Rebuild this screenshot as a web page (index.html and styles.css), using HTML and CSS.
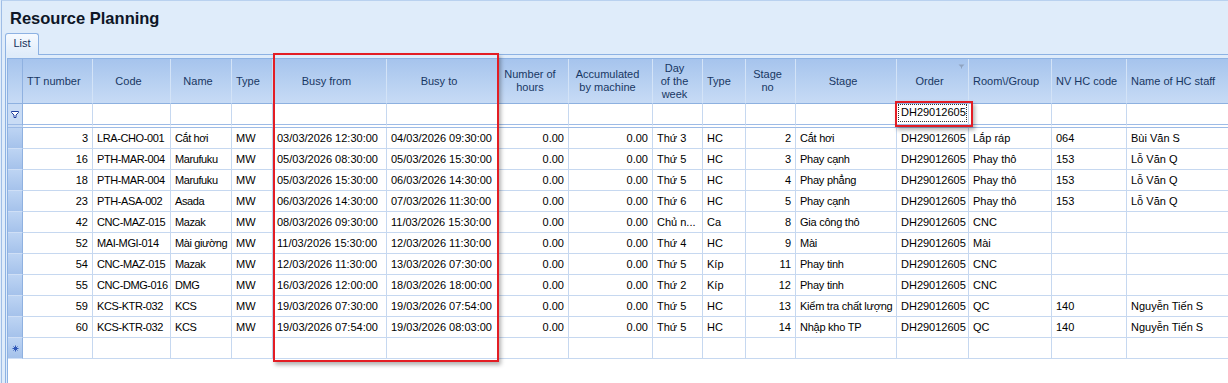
FILE: index.html
```html
<!DOCTYPE html>
<html lang="vi">
<head>
    <meta charset="UTF-8">
    <meta name="viewport" content="width=device-width, initial-scale=1.0">
    <title>Resource Planning</title>
    <link rel="stylesheet" href="styles.css">
</head>
<body>
    <div class="window">
        <h1 class="title">Resource Planning</h1>

        <div class="tabs">
            <div class="tab">List</div>
        </div>

        <div class="tab-page">
            <div class="grid">
                <table class="data">
                    <colgroup>
                        <col style="width:15px">
                        <col style="width:70px">
                        <col style="width:78px">
                        <col style="width:61px">
                        <col style="width:41px">
                        <col style="width:114px">
                        <col style="width:111px">
                        <col style="width:71px">
                        <col style="width:84px">
                        <col style="width:50px">
                        <col style="width:43px">
                        <col style="width:50px">
                        <col style="width:101px">
                        <col style="width:72px">
                        <col style="width:83px">
                        <col style="width:75px">
                        <col style="width:120px">
                    </colgroup>
                    <thead>
                        <tr class="head">
                            <th class="ind"></th>
                            <th class="l">TT number</th>
                            <th>Code</th>
                            <th>Name</th>
                            <th class="l">Type</th>
                            <th>Busy from</th>
                            <th>Busy to</th>
                            <th>Number of<br>hours</th>
                            <th>Accumulated<br>by machine</th>
                            <th>Day<br>of the<br>week</th>
                            <th class="l">Type</th>
                            <th>Stage<br>no</th>
                            <th>Stage</th>
                            <th class="filtered">Order
                                <svg class="col-filter" width="7" height="5" viewBox="0 0 7 5"><path d="M0.5 0.5h6l-2.5 2.5v1.5h-1v-1.5z" fill="#8fa3c0"/></svg>
                            </th>
                            <th class="l">Room\/Group</th>
                            <th class="l">NV HC code</th>
                            <th class="l">Name of HC staff</th>
                        </tr>
                        <tr class="filter-row">
                            <td class="ind filter-ind">
                                <svg width="8" height="8" viewBox="0 0 8 8"><path d="M0.5 1.5h7v1l-2.5 2.5v2.5h-2v-2.5l-2.5-2.5z" fill="#fff" stroke="#1f3d9c"/></svg>
                            </td>
                            <td></td><td></td><td></td><td></td><td></td><td></td><td></td><td></td>
                            <td></td><td></td><td></td><td></td>
                            <td><span class="focus">DH29012605</span></td>
                            <td></td><td></td><td></td>
                        </tr>
                    </thead>
                    <tbody>
                        <tr>
                            <td class="ind"></td><td class="r">3</td><td>LRA-CHO-001</td><td>Cắt hơi</td><td>MW</td>
                            <td>03/03/2026 12:30:00</td><td>04/03/2026 09:30:00</td><td class="r">0.00</td><td class="r">0.00</td>
                            <td>Thứ 3</td><td>HC</td><td class="r">2</td><td>Cắt hơi</td><td>DH29012605</td><td>Lắp ráp</td><td>064</td><td>Bùi Văn S</td>
                        </tr>
                        <tr>
                            <td class="ind"></td><td class="r">16</td><td>PTH-MAR-004</td><td>Marufuku</td><td>MW</td>
                            <td>05/03/2026 08:30:00</td><td>05/03/2026 15:30:00</td><td class="r">0.00</td><td class="r">0.00</td>
                            <td>Thứ 5</td><td>HC</td><td class="r">3</td><td>Phay cạnh</td><td>DH29012605</td><td>Phay thô</td><td>153</td><td>Lỗ Văn Q</td>
                        </tr>
                        <tr>
                            <td class="ind"></td><td class="r">18</td><td>PTH-MAR-004</td><td>Marufuku</td><td>MW</td>
                            <td>05/03/2026 15:30:00</td><td>06/03/2026 14:30:00</td><td class="r">0.00</td><td class="r">0.00</td>
                            <td>Thứ 5</td><td>HC</td><td class="r">4</td><td>Phay phẳng</td><td>DH29012605</td><td>Phay thô</td><td>153</td><td>Lỗ Văn Q</td>
                        </tr>
                        <tr>
                            <td class="ind"></td><td class="r">23</td><td>PTH-ASA-002</td><td>Asada</td><td>MW</td>
                            <td>06/03/2026 14:30:00</td><td>07/03/2026 11:30:00</td><td class="r">0.00</td><td class="r">0.00</td>
                            <td>Thứ 6</td><td>HC</td><td class="r">5</td><td>Phay cạnh</td><td>DH29012605</td><td>Phay thô</td><td>153</td><td>Lỗ Văn Q</td>
                        </tr>
                        <tr>
                            <td class="ind"></td><td class="r">42</td><td>CNC-MAZ-015</td><td>Mazak</td><td>MW</td>
                            <td>08/03/2026 09:30:00</td><td>11/03/2026 15:30:00</td><td class="r">0.00</td><td class="r">0.00</td>
                            <td>Chủ n...</td><td>Ca</td><td class="r">8</td><td>Gia công thô</td><td>DH29012605</td><td>CNC</td><td></td><td></td>
                        </tr>
                        <tr>
                            <td class="ind"></td><td class="r">52</td><td>MAI-MGI-014</td><td>Mài giường</td><td>MW</td>
                            <td>11/03/2026 15:30:00</td><td>12/03/2026 11:30:00</td><td class="r">0.00</td><td class="r">0.00</td>
                            <td>Thứ 4</td><td>HC</td><td class="r">9</td><td>Mài</td><td>DH29012605</td><td>Mài</td><td></td><td></td>
                        </tr>
                        <tr>
                            <td class="ind"></td><td class="r">54</td><td>CNC-MAZ-015</td><td>Mazak</td><td>MW</td>
                            <td>12/03/2026 11:30:00</td><td>13/03/2026 07:30:00</td><td class="r">0.00</td><td class="r">0.00</td>
                            <td>Thứ 5</td><td>Kíp</td><td class="r">11</td><td>Phay tinh</td><td>DH29012605</td><td>CNC</td><td></td><td></td>
                        </tr>
                        <tr>
                            <td class="ind"></td><td class="r">55</td><td>CNC-DMG-016</td><td>DMG</td><td>MW</td>
                            <td>16/03/2026 12:00:00</td><td>18/03/2026 18:00:00</td><td class="r">0.00</td><td class="r">0.00</td>
                            <td>Thứ 2</td><td>Kíp</td><td class="r">12</td><td>Phay tinh</td><td>DH29012605</td><td>CNC</td><td></td><td></td>
                        </tr>
                        <tr>
                            <td class="ind"></td><td class="r">59</td><td>KCS-KTR-032</td><td>KCS</td><td>MW</td>
                            <td>19/03/2026 07:30:00</td><td>19/03/2026 07:54:00</td><td class="r">0.00</td><td class="r">0.00</td>
                            <td>Thứ 5</td><td>HC</td><td class="r">13</td><td>Kiểm tra chất lượng</td><td>DH29012605</td><td>QC</td><td>140</td><td>Nguyễn Tiến S</td>
                        </tr>
                        <tr>
                            <td class="ind"></td><td class="r">60</td><td>KCS-KTR-032</td><td>KCS</td><td>MW</td>
                            <td>19/03/2026 07:54:00</td><td>19/03/2026 08:03:00</td><td class="r">0.00</td><td class="r">0.00</td>
                            <td>Thứ 5</td><td>HC</td><td class="r">14</td><td>Nhập kho TP</td><td>DH29012605</td><td>QC</td><td>140</td><td>Nguyễn Tiến S</td>
                        </tr>
                        <tr class="new-row">
                            <td class="ind">
                                <svg width="7" height="7" viewBox="0 0 7 7"><path d="M3.5 0.5v6M0.5 3.5h6M1.5 1.5l4 4M5.5 1.5l-4 4" stroke="#2e56b8" stroke-width="1"/></svg>
                            </td>
                            <td></td><td></td><td></td><td></td><td></td><td></td><td></td><td></td>
                            <td></td><td></td><td></td><td></td><td></td><td></td><td></td><td></td>
                        </tr>
                    </tbody>
                </table>
            </div>
        </div>
    </div>

    <!-- red highlight marks drawn over the grid -->
    <div class="mark mark-busy"></div>
    <div class="mark mark-order"></div>
</body>
</html>
```

FILE: styles.css
```css
body {
    margin: 0;
    font-family: "Liberation Sans", Arial, sans-serif;
    font-size: 11px;
    background-color: #dfecfa;
    overflow: hidden;
}

.window {
    height: 383px;
    margin-left: 1px;
    border-left: 1px solid #9fbde6;
    border-top: 1px solid #b9d1ef;
    background-color: #dfecfa;
}

.title {
    margin: 7px 0 0 8px;
    font-size: 16.5px;
    line-height: 20px;
    font-weight: bold;
    color: #0e1626;
}

.tabs {
    display: flex;
    margin: 5px 0 0 3px;
}

.tab {
    position: relative;
    z-index: 1;
    width: 32px;
    height: 21px;
    margin-bottom: -1px;
    border: 1px solid #8db2e3;
    border-bottom: none;
    border-radius: 3px 3px 0 0;
    background: linear-gradient(#f6faff, #dfecfa);
    color: #15305a;
    text-align: center;
    line-height: 19px;
}

.tab-page {
    height: 330px;
    margin-left: 3px;
    padding: 3px 0 0 1px;
    border-top: 1px solid #8db2e3;
    border-left: 1px solid #8db2e3;
}

.grid {
    height: 326px;
    overflow: hidden;
    border-top: 1px solid #8db2e3;
    border-left: 1px solid #8db2e3;
    background-color: #fff;
}

.data {
    width: 1239px;
    table-layout: fixed;
    border-collapse: separate;
    border-spacing: 0;
    color: #000;
}

.data th,
.data td {
    border-right: 1px solid #c6d8f0;
    border-bottom: 1px solid #c6d8f0;
    white-space: nowrap;
}

.data th {
    height: 44px;
    padding: 0 10px 0 4px;
    background: linear-gradient(#a6c4ed, #c7dbf5);
    border-right-color: #d3e3f7;
    border-bottom-color: #8eb1e0;
    color: #183763;
    font-weight: normal;
    line-height: 13px;
    text-align: center;
}

.data th.l {
    text-align: left;
}

.data th.filtered {
    position: relative;
}

.col-filter {
    position: absolute;
    top: 5px;
    right: 3px;
}

.data td {
    height: 20px;
    padding: 0 1px 0 4px;
    line-height: 20px;
}

/* code, name and stage columns are narrow for this font */
.data tbody td:nth-child(3),
.data tbody td:nth-child(4) {
    letter-spacing: -0.4px;
}

.data tbody td:nth-child(13) {
    letter-spacing: -0.25px;
}

.data td.r {
    padding: 0 4px 0 1px;
    text-align: right;
}

.data .ind {
    padding: 0;
    border-right: 1px solid #8fb1e0;
    border-bottom: 1px solid #cfdff6;
    background: linear-gradient(#bdd4f3, #a5c2eb);
    text-align: center;
}

.data th.ind {
    background: linear-gradient(#a6c4ed, #c7dbf5);
    border-bottom-color: #8eb1e0;
}

.filter-row td {
    border-bottom: 4px double #9dbbe6;
}

.data .filter-ind {
    background: #c9dcf5;
    border-bottom: 4px double #9dbbe6;
}

.filter-ind svg,
.new-row svg {
    display: block;
    margin: 0 auto;
}

.focus {
    display: block;
    height: 16px;
    margin: -2px 0 0 -3px;
    padding-left: 2px;
    border: 1px dotted #333;
    line-height: 14px;
}

.mark {
    position: absolute;
    box-sizing: border-box;
    border: 2px solid #e31d24;
    box-shadow: 2px 3px 4px rgba(0, 0, 0, 0.3);
}

.mark-busy {
    left: 273px;
    top: 53px;
    width: 226px;
    height: 309px;
}

.mark-order {
    left: 895px;
    top: 101px;
    width: 78px;
    height: 26px;
}
```
